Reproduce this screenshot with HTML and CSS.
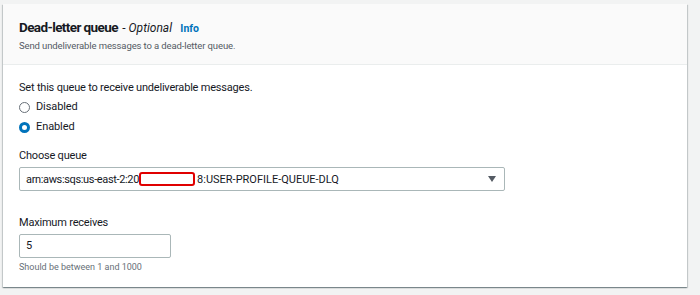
FILE: index.html
```html
<!DOCTYPE html>
<html>
<head>
<meta charset="utf-8">
<link rel="stylesheet" href="styles.css">
</head>
<body>
<div class="page">
  <section class="card">
    <header class="card-header">
      <h2 class="title"><span class="name">Dead-letter queue</span> <span class="optional">- <i>Optional</i></span> <a class="info">Info</a></h2>
      <p class="desc">Send undeliverable messages to a dead-letter queue.</p>
    </header>
    <div class="card-body">
      <div class="field">
        <div class="label">Set this queue to receive undeliverable messages.</div>
        <div class="radios">
          <label class="radio"><span class="dot"></span>Disabled</label>
          <label class="radio"><span class="dot checked"></span>Enabled</label>
        </div>
      </div>
      <div class="field field-select">
        <div class="label">Choose queue</div>
        <div class="select">
          <span class="value"><span class="arn">arn:aws:sqs:us-east-2:20</span><span class="redact"></span>8:USER-PROFILE-QUEUE-DLQ</span>
          <svg class="caret" width="8" height="6" viewBox="0 0 8 6"><path d="M0 0 H8 L4 6 Z" fill="#545b64"/></svg>
        </div>
      </div>
      <div class="field field-input">
        <div class="label">Maximum receives</div>
        <div class="input">5</div>
        <div class="hint">Should be between 1 and 1000</div>
      </div>
    </div>
  </section>
</div>
</body>
</html>
```
FILE: styles.css
```css
* { box-sizing: border-box; }
html, body { margin: 0; padding: 0; }
body {
  background: #f2f3f3;
  font-family: Roboto, "Liberation Sans", Arial, sans-serif;
  color: #16191f;
  width: 700px;
  height: 295px;
  overflow: hidden;
}
.page { padding: 4px 13px 0 3px; }
.card {
  background: #fff;
  box-shadow: 0 1px 1px 0 rgba(0,28,36,0.3), 1px 1px 1px 0 rgba(0,28,36,0.15), -1px 1px 1px 0 rgba(0,28,36,0.15);
  height: 283px;
}
.card-header {
  background: #fafafa;
  border-bottom: 1px solid #eaeded;
  padding: 15px 16px 0 16px;
  height: 61px;
}
.title {
  margin: 0;
  font-size: 13.5px;
  font-weight: bold;
  line-height: 16px;
}
.name { letter-spacing: -0.6px; }
.optional { font-weight: normal; font-size: 12px; margin-left: 1px; }
.info { color: #0073bb; font-size: 10.5px; font-weight: bold; margin-left: 5px; }
.desc {
  margin: 3px 0 0;
  font-size: 9.5px;
  color: #545b64;
  line-height: 12px;
  letter-spacing: -0.12px;
}
.card-body { padding: 16px 16px 0 16px; }
.label { font-size: 11px; line-height: 14px; letter-spacing: -0.2px; }
.radios { display: flex; flex-direction: column; margin-top: 2px; }
.radio { display: flex; align-items: center; gap: 6px; font-size: 11px; line-height: 20px; letter-spacing: -0.1px; }
.dot {
  width: 11px; height: 11px;
  border: 1px solid #687078;
  border-radius: 50%;
  background: #fff;
}
.dot.checked { border: 3.5px solid #0073bb; }
.field-select { margin-top: 12px; }
.select {
  margin-top: 4px;
  width: 486px;
  height: 24px;
  border: 1px solid #aab7b8;
  border-radius: 2px;
  display: flex;
  align-items: center;
  justify-content: space-between;
  padding: 0 8px 0 6px;
  font-size: 11px;
}
.value { display: flex; align-items: center; }
.arn { letter-spacing: -0.35px; }
.redact {
  display: inline-block;
  width: 56px;
  height: 14px;
  border: 2px solid #e00000;
  border-radius: 3px;
  margin: 0 2px 0 0;
}
.field-input { margin-top: 25px; }
.input {
  margin-top: 4px;
  width: 152px;
  height: 24px;
  border: 1px solid #aab7b8;
  border-radius: 2px;
  padding: 0 6px;
  font-size: 11px;
  line-height: 22px;
}
.hint { font-size: 9px; color: #687078; margin-top: 3px; line-height: 12px; }
```
